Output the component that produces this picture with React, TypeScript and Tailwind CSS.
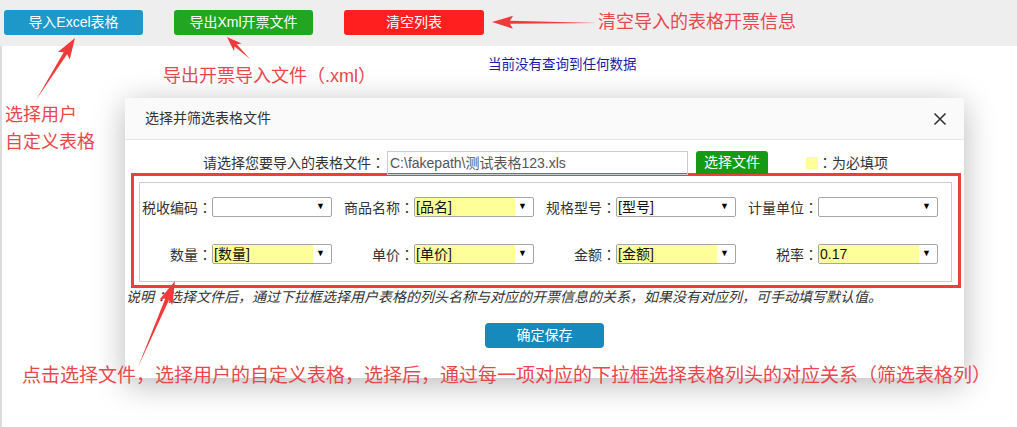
import React from "react";

type P = [number, number];

function arrowPoints(t: P, h: P, headLen: number, headW: number, shaftW: number): string {
  const dx = h[0] - t[0];
  const dy = h[1] - t[1];
  const len = Math.hypot(dx, dy);
  const ux = dx / len;
  const uy = dy / len;
  const nx = -uy;
  const ny = ux;
  const bx = h[0] - ux * headLen;
  const by = h[1] - uy * headLen;
  const nbx = h[0] - ux * (headLen + 3);
  const nby = h[1] - uy * (headLen + 3);
  const pts: P[] = [
    [t[0], t[1]],
    [bx + (nx * shaftW) / 2, by + (ny * shaftW) / 2],
    [nbx + (nx * headW) / 2, nby + (ny * headW) / 2],
    [h[0], h[1]],
    [nbx - (nx * headW) / 2, nby - (ny * headW) / 2],
    [bx - (nx * shaftW) / 2, by - (ny * shaftW) / 2],
  ];
  return pts.map((p) => `${p[0].toFixed(1)},${p[1].toFixed(1)}`).join(" ");
}

function Colon() {
  return <span className="font-['Noto_Sans_CJK_TC',sans-serif]">：</span>;
}

function Select({ value, yellow }: { value?: string; yellow?: boolean }) {
  return (
    <div className="relative flex h-[20px] w-[120px] items-center rounded-[2px] border border-[#a6a6a6] bg-white">
      {yellow && <div className="absolute left-0 top-0 h-full w-[100px] bg-[#ffff99]" />}
      <span className="relative pl-[1px] text-[14px] leading-none text-[#111]">{value}</span>
      <span className="absolute right-[6px] top-[4px] text-[9px] leading-none text-black">▼</span>
    </div>
  );
}

function Field({ label, value, yellow }: { label: string; value?: string; yellow?: boolean }) {
  return (
    <div className="flex items-center">
      <div className="w-[72px] text-right text-[14px] leading-none text-[#333]">
        {label}
        <Colon />
      </div>
      <Select value={value} yellow={yellow} />
    </div>
  );
}

export default function App() {
  const red = "#ef3b3b";
  return (
    <div className="relative h-[427px] w-[1017px] overflow-hidden bg-white font-['Liberation_Sans','Noto_Sans_CJK_SC',sans-serif]">
      {/* top bar */}
      <div className="flex h-[46px] items-start bg-[#eeeeee] pl-[4px] pt-[10px]">
        <button className="flex h-[25px] w-[139px] items-center justify-center rounded-[3px] bg-[#1e97c9] text-[14px] text-white">
          导入Excel表格
        </button>
        <button className="ml-[31px] flex h-[25px] w-[139px] items-center justify-center rounded-[3px] bg-[#22a622] text-[14px] text-white">
          导出Xml开票文件
        </button>
        <button className="ml-[31px] flex h-[25px] w-[140px] items-center justify-center rounded-[3px] bg-[#ff1f1f] text-[14px] text-white">
          清空列表
        </button>
      </div>

      {/* content */}
      <div className="h-[381px] border-l-[2px] border-[#dcdcdc] pl-[486px] pt-[10px]">
        <div className="text-[13.5px] leading-[18px] text-[#1a1aa8]">当前没有查询到任何数据</div>
      </div>

      {/* modal */}
      <div className="absolute left-[125px] top-[98px] h-[280px] w-[839px] bg-white shadow-[0_6px_30px_rgba(0,0,0,0.28)]">
        <div className="flex h-[42px] items-center justify-between border-b border-[#e6e6e6] bg-[#fafafa] pl-[20px] pr-[17px]">
          <span className="text-[14px] text-[#333]">选择并筛选表格文件</span>
          <svg width="14" height="14" viewBox="0 0 14 14">
            <path d="M1.5 1.5 L12.5 12.5 M12.5 1.5 L1.5 12.5" stroke="#333" strokeWidth="1.6" />
          </svg>
        </div>
        <div className="mt-[11px] flex items-center">
          <div className="w-[260px] text-right text-[14px] text-[#333]">
            请选择您要导入的表格文件
            <Colon />
          </div>
          <div className="ml-[2px] flex h-[24px] w-[301px] items-center border border-[#cccccc] pl-[2px] text-[14px] text-[#555]">
            C:\fakepath\测试表格123.xls
          </div>
          <div className="ml-[8px] flex h-[23px] w-[72px] items-center justify-center self-start rounded-t-[3px] bg-[#149a14] text-[14px] text-white">
            选择文件
          </div>
          <div className="ml-[38px] h-[12px] w-[12px] bg-[#ffff99]" />
          <span className="text-[14px] text-[#333]">
            <Colon />
            为必填项
          </span>
        </div>

        {/* red annotation box */}
        <div className="-mt-[2px] ml-[6px] h-[115px] w-[830px] border-[3px] border-[#e8403f] pl-[5px] pr-[6px] pt-[6px]">
          <div className="flex h-[100px] flex-col border border-[#cccccc] pt-[14px]">
            <div className="flex gap-[10px]">
              <Field label="税收编码" />
              <Field label="商品名称" value="[品名]" yellow />
              <Field label="规格型号" value="[型号]" />
              <Field label="计量单位" />
            </div>
            <div className="mt-[27px] flex gap-[10px]">
              <Field label="数量" value="[数量]" yellow />
              <Field label="单价" value="[单价]" yellow />
              <Field label="金额" value="[金额]" yellow />
              <Field label="税率" value="0.17" yellow />
            </div>
          </div>
        </div>

        <div className="mt-[-1px] pl-[1px] text-[14px] italic leading-[18px] text-[#333]">
          说明<Colon />选择文件后，通过下拉框选择用户表格的列头名称与对应的开票信息的关系，如果没有对应列，可手动填写默认值。
        </div>
        <div className="mt-[17px] flex justify-center">
          <div className="flex h-[25px] w-[119px] items-center justify-center rounded-[4px] bg-[#1689bd] text-[14px] text-white">
            确定保存
          </div>
        </div>
      </div>

      {/* annotations */}
      <div className="absolute left-[598px] top-[11px] text-[18px] leading-[22px] text-[#e8474c]">清空导入的表格开票信息</div>
      <div className="absolute left-[163px] top-[65px] text-[18px] leading-[22px] text-[#e8474c]">导出开票导入文件（.xml）</div>
      <div className="absolute left-[5px] top-[102px] text-[18px] leading-[27px] text-[#e8474c]">
        <div>选择用户</div>
        <div>自定义表格</div>
      </div>
      <div className="absolute left-[22px] top-[365px] text-[19px] leading-[22px] text-[#e8474c]">
        点击选择文件，选择用户的自定义表格，选择后，通过每一项对应的下拉框选择表格列头的对应关系（筛选表格列）
      </div>

      <svg className="pointer-events-none absolute left-0 top-0" width="1017" height="427">
        <polygon points={arrowPoints([36, 100], [75, 38], 18, 14, 4)} fill={red} />
        <polygon points={arrowPoints([250, 59], [227, 37], 12, 11, 3)} fill={red} />
        <polygon points={arrowPoints([598, 23], [492, 22], 18, 13, 3)} fill={red} />
        <polygon points={arrowPoints([138, 367], [175, 281], 20, 14, 4)} fill={red} />
      </svg>
    </div>
  );
}
